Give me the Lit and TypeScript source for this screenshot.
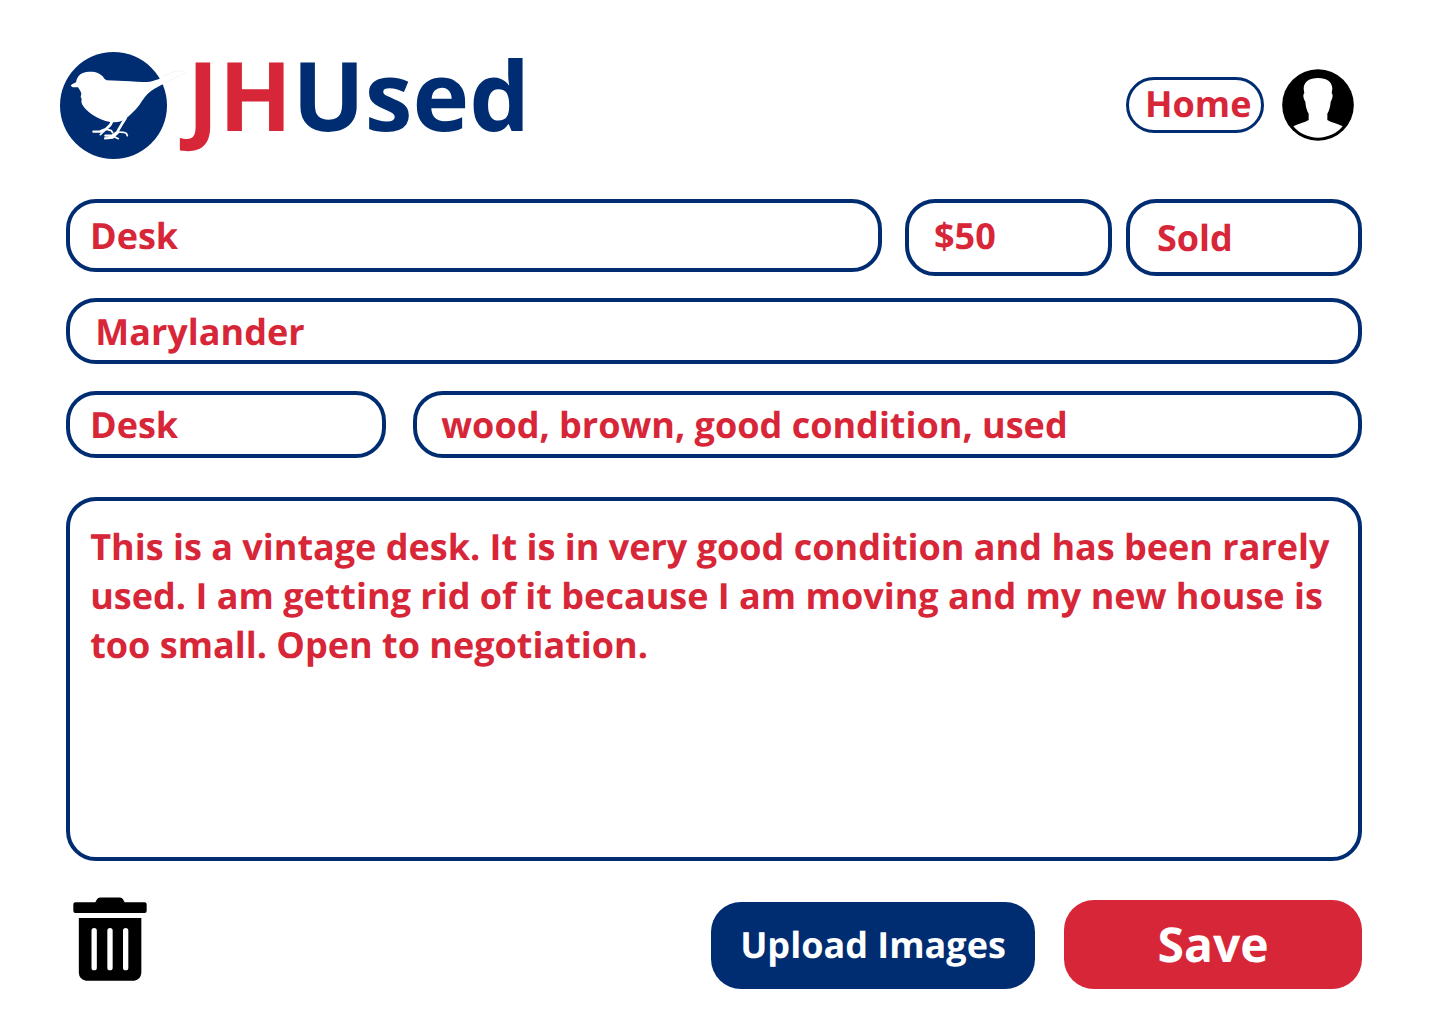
import { LitElement, html, css, svg } from "lit";
import { customElement, property } from "lit/decorators.js";

const bird = svg`
  <circle cx="190.500" cy="196.500" r="160.500" fill="#002d72"></circle>
  <path fill="#fff" d="M62 137 L66 133 L78 127 C80 114 86 104 98 99 C108 95 122 94 134 96 C144 98 152 103 158 109 C162 115 164 119 170 121 L240 124 C262 126 282 127 300 125 L330 116 L372 95 L402 92 L408 98 L372 115 L338 133 L312 147 C298 155 288 166 276 183 C268 198 252 214 236 229 C226 239 212 246 196 247 C176 247 156 241 140 232 C122 222 108 210 101 200 C95 193 93 186 95 178 L92 170 L94 161 C92 153 88 148 84 142 L68 142 Z"></path>
  <g fill="none" stroke="#fff" stroke-width="6.500" stroke-linecap="round" stroke-linejoin="round">
    <path stroke-width="8" d="M187 243 L180 256 L169 266 M227 234 L215 253 L204 272"></path>
    <path d="M169 267 L153 275 L130 275 M165 268 L152 273"></path>
    <path stroke-width="5" d="M168 268 L157 278 L151 284 M171 268 L184 272 L188 278"></path>
    <path d="M204 274 L186 287 L166 287 M205 277 L188 293 L165 295"></path>
    <path stroke-width="5" d="M193 290 L205 296 M206 276 L220 277 L229 280 L232 287"></path>
  </g>
  <path fill="none" stroke="#ebebeb" stroke-width="1.600" d="M338 110 L372 95 L402 92 L408 98 L372 115 L345 129"></path>`;

@customElement("form-field")
export class FormField extends LitElement {
  @property() value = "";

  static styles = css`
    :host {
      display: block;
      box-sizing: border-box;
      border: 4px solid #002d72;
      border-radius: 30px;
      background: #fff;
      color: #d72638;
      font: 700 36px/49px "Open Sans", sans-serif;
    }
    .value {
      margin: 0;
    }
  `;

  render() {
    return html`<p class="value">${this.value}</p>`;
  }
}

@customElement("app-root")
export class AppRoot extends LitElement {
  static styles = css`
    :host {
      display: block;
      box-sizing: border-box;
      height: 1024px;
      overflow: hidden;
      background: #fff;
      font: 700 36px/49px "Open Sans", sans-serif;
      text-rendering: geometricPrecision;
    }
    .header {
      display: flex;
      align-items: flex-start;
      box-sizing: border-box;
      height: 199px;
      padding: 0 86px 0 60px;
    }
    .bird {
      flex: none;
      width: 128px;
      height: 107px;
      margin-top: 52px;
    }
    .brand {
      margin: 29px auto 0 -1px;
      font-size: 96px;
      line-height: 131px;
      font-weight: 700;
      color: #002d72;
    }
    .accent {
      color: #d72638;
    }
    .home {
      box-sizing: border-box;
      width: 138px;
      height: 56px;
      margin: 77px 18px 0 0;
      padding: 0 0 2px 16px;
      border: 3px solid #002d72;
      border-radius: 28px;
      background: #fff;
      color: #d72638;
      font: inherit;
      line-height: 46px;
      text-align: left;
      text-rendering: inherit;
    }
    .avatar {
      flex: none;
      width: 72px;
      height: 72px;
      margin-top: 69px;
    }
    .form {
      display: grid;
      grid-template-rows: 99px 93px 106px 364px;
      padding: 0 78px 0 66px;
    }
    .row {
      display: flex;
      align-items: flex-start;
    }
    .title {
      width: 816px;
      height: 73px;
      margin-right: 23px;
      padding: 8px 20px;
    }
    .price {
      width: 207px;
      height: 77px;
      margin-right: 14px;
      padding: 8px 25px;
    }
    .status {
      width: 236px;
      height: 77px;
      padding: 10px 27px;
    }
    .place {
      width: 1296px;
      height: 66px;
      padding: 5px 25.3px;
    }
    .category {
      width: 320px;
      height: 67px;
      margin-right: 27px;
      padding: 5px 20px;
    }
    .tags {
      width: 949px;
      height: 67px;
      padding: 5px 24.3px;
    }
    .description {
      width: 1296px;
      height: 364px;
      padding: 21px 20px 21px 20.2px;
    }
    .footer {
      display: flex;
      align-items: flex-start;
      padding: 36px 78px 0 73px;
    }
    .trash {
      width: 74px;
      height: 84px;
      margin-right: auto;
    }
    .button {
      border: 0;
      border-radius: 30px;
      color: #fff;
      font: inherit;
      text-align: center;
      text-rendering: inherit;
    }
    .upload {
      width: 324px;
      height: 87px;
      margin: 5px 29px 0 0;
      padding: 0 0 2px;
      background: #002d72;
    }
    .save {
      width: 298px;
      height: 89px;
      margin-top: 3px;
      padding: 0;
      background: #d72638;
      font-size: 48px;
      line-height: 65px;
    }
  `;

  render() {
    return html`
      <header class="header">
        <svg class="bird" viewBox="30 36 384 321">${bird}</svg>
        <h1 class="brand"><span class="accent">JH</span>Used</h1>
        <button class="home">Home</button>
        <svg class="avatar" viewBox="516 27 216 216">
          <circle cx="624" cy="135" r="107.500"></circle>
          <path fill="#fff" d="M624 54 C650 54 667 66 667 86 L665 100 C670 103 668 116 662 125 C661 139 658 151 652 161 L652 180 C664 188 682 190 698 199 C681 220 654 233 624 233 C594 233 567 220 550 199 C566 190 584 188 596 180 L596 161 C590 151 587 139 586 125 C580 116 578 103 583 100 L581 86 C581 66 598 54 624 54 Z"></path>
        </svg>
      </header>
      <main class="form">
        <div class="row">
          <form-field class="title" value="Desk"></form-field>
          <form-field class="price" value="$50"></form-field>
          <form-field class="status" value="Sold"></form-field>
        </div>
        <div class="row">
          <form-field class="place" value="Marylander"></form-field>
        </div>
        <div class="row">
          <form-field class="category" value="Desk"></form-field>
          <form-field class="tags" value="wood, brown, good condition, used"></form-field>
        </div>
        <form-field
          class="description"
          value="This is a vintage desk. It is in very good condition and has been rarely used. I am getting rid of it because I am moving and my new house is too small. Open to negotiation."
        ></form-field>
      </main>
      <footer class="footer">
        <svg class="trash" viewBox="39 36 222 252">
          <path d="M46 52 H106 L111 43 Q114 37.500 120 37.500 H180 Q186 37.500 189 43 L194 52 H254 Q260 52 260 58 V77 Q260 84 254 84 H46 Q40 84 40 77 V58 Q40 52 46 52 Z"></path>
          <path fill-rule="evenodd" d="M56.500 99 H244 V264 Q242 284 223 287 H78 Q58 284 56.500 264 Z M94.500 137 V248 a8 8 0 0 0 16 0 V137 a8 8 0 0 0 -16 0 Z M142 137 V248 a8 8 0 0 0 16 0 V137 a8 8 0 0 0 -16 0 Z M189 137 V248 a8 8 0 0 0 16 0 V137 a8 8 0 0 0 -16 0 Z"></path>
        </svg>
        <button class="button upload">Upload Images</button>
        <button class="button save">Save</button>
      </footer>
    `;
  }
}
